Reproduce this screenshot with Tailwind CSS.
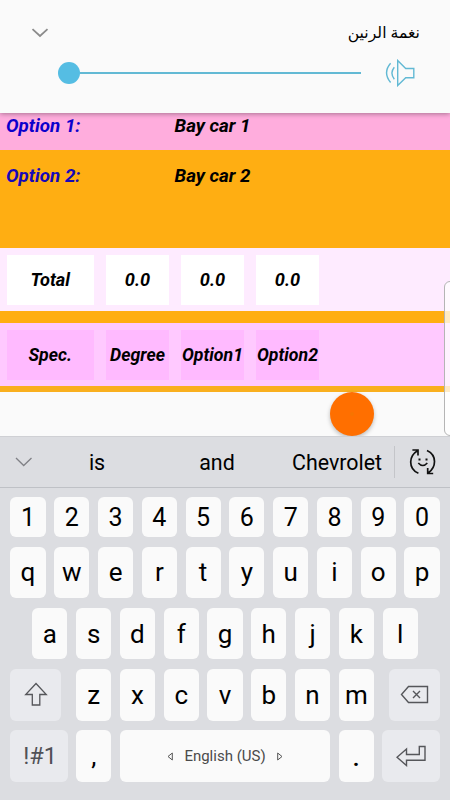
<!DOCTYPE html>
<html lang="en">
<head>
<meta charset="utf-8">
<title>Options</title>
<script src="https://cdn.jsdelivr.net/npm/@tailwindcss/browser@4"></script>
</head>
<body class="w-[450px] h-[800px] overflow-hidden bg-[#fafafa] font-[Roboto,sans-serif] text-black">
<div class="relative flex flex-col w-[450px] h-[800px]">
  <!-- Volume panel -->
  <header class="relative z-10 h-[113px] shrink-0 bg-[#fafafa] shadow-[0_1px_5px_rgba(0,0,0,0.35)] pt-[20px]">
    <div class="flex items-center justify-between h-6 pl-[31px] pr-[30px]">
      <svg class="w-[18px] h-[10px] mt-px" viewBox="0 0 18 10" fill="none" stroke="#8b8b8b" stroke-width="1.8"><path d="M1.5 1.2 9 8l7.500-6.800"/></svg>
      <span dir="rtl" lang="ar" class="text-[15.700px] leading-6 font-['Noto_Sans','DejaVu_Sans',sans-serif]">نغمة الرنين</span>
    </div>
    <div class="flex items-center h-[30px] mt-[14px] pl-[58px]">
      <div class="size-[21.500px] rounded-full bg-[#55bde3]"></div>
      <div class="h-[2.500px] w-[281.500px] bg-[#62b9d4]"></div>
      <svg class="w-[30px] h-[28px] ml-[23.500px]" viewBox="0 0 30 28" fill="none" stroke="#62b9d4" stroke-width="1.400"><path d="M12.700 1.500V26.500L20.700 18.700H28.800V9.500H20.700ZM9.300 8.200Q4.500 14 9.300 20.200M5.600 4.200Q-2.500 13.500 5.600 23.500"/></svg>
    </div>
  </header>

  <!-- Options table -->
  <main class="h-[323px] shrink-0 flex flex-col text-[18.200px] font-bold italic">
    <div class="h-[37px] bg-[#ffaddd] flex pl-[6px] leading-[26px] text-[18.800px]"><span class="w-[168.500px] text-[#0c00cc]">Option 1:</span><span>Bay car 1</span></div>
    <div class="h-[98px] bg-[#ffae12] flex pl-[6px] pt-[12px] leading-[28px] text-[18.800px]"><span class="w-[168.500px] text-[#1608b8]">Option 2:</span><span>Bay car 2</span></div>
    <div class="h-[63px] bg-[#feebff] flex gap-3 pl-[6.500px] pt-[6.500px]">
      <div class="w-[87.500px] h-[50px] bg-white flex items-center justify-center">Total</div>
      <div class="w-[63px] h-[50px] bg-white flex items-center justify-center">0.0</div>
      <div class="w-[63px] h-[50px] bg-white flex items-center justify-center">0.0</div>
      <div class="w-[63px] h-[50px] bg-white flex items-center justify-center">0.0</div>
    </div>
    <div class="h-[12px] bg-[#ffae12]"></div>
    <div class="h-[63px] bg-[#ffc9ff] flex gap-3 pl-[6.500px] pt-[6.500px] text-[17.700px]">
      <div class="w-[87.500px] h-[50px] pt-[2px] bg-[#ffbaff] flex items-center justify-center">Spec.</div>
      <div class="w-[63px] h-[50px] pt-[2px] bg-[#ffbaff] flex items-center justify-center">Degree</div>
      <div class="w-[63px] h-[50px] pt-[2px] bg-[#ffbaff] flex items-center justify-center">Option1</div>
      <div class="w-[63px] h-[50px] pt-[2px] bg-[#ffbaff] flex items-center justify-center">Option2</div>
    </div>
    <div class="h-[6px] bg-[#f9af1e]"></div>
  </main>

  <!-- Floating button and edge handle -->
  <div class="absolute left-[329.500px] top-[392px] size-[44px] rounded-full bg-[#ff6f00] shadow-[0_2px_4px_rgba(0,0,0,0.25)] flex items-center justify-center"><i class="size-1 rounded-full bg-[#f77400]"></i></div>
  <div class="absolute left-[444px] top-[281px] w-[12px] h-[155px] rounded-[6px] border border-[#b5b5b5] bg-white/75"></div>

  <!-- Keyboard -->
  <section class="relative h-[364px] bg-[#dcdde1]">
    <div class="h-[52px] border-t border-b border-t-[#cfd0d4] border-b-[#bfc1c6] flex items-center text-[21.400px]">
      <svg class="w-[18px] h-[10px] ml-[15px]" viewBox="0 0 18 10" fill="none" stroke="#808186" stroke-width="1.300"><path d="M1 1l7.700 7.500L16.500 1"/></svg>
      <span class="w-[120px] ml-[4px] text-center pt-[3px]">is</span>
      <span class="w-[120px] text-center pt-[3px]">and</span>
      <span class="w-[117px] text-center pl-[3px] pt-[3px]">Chevrolet</span>
      <i class="w-px h-8 bg-[#c4c5c9]"></i>
      <svg class="w-[28px] h-[28px] ml-[14px]" viewBox="0 0 28 28" fill="none" stroke="#111" stroke-width="1.700"><path d="M9.400 25.300Q1.700 22 1.700 14 1.700 7 8.400 2.700M3.400 2h5.600v5.500M18 2.500Q25.500 6 25.500 13.500 25.500 20.500 19.200 25M24.200 25.500h-5.500v-5.600"/><path d="M9.300 15q4.500 5 9 0"/><path d="M9.500 11.500h2M16.500 11.500h2" stroke-width="2"/></svg>
    </div>
    <div id="keys" class="flex flex-col items-center gap-[9.700px] pt-[9px] text-[26px] leading-none">
      <div class="flex gap-[8.700px] h-[40px] text-[25px]" data-row="1234567890"></div>
      <div class="flex gap-[8.700px] h-[51.500px]" data-row="qwertyuiop"></div>
      <div class="flex gap-[8.700px] h-[51.500px]" data-row="asdfghjkl"></div>
      <div class="flex h-[51.500px] w-[429.200px]">
        <div class="w-[50.700px] rounded-[6px] bg-[#e9eaee] flex items-center justify-center">
          <svg class="w-[24px] h-[25px]" viewBox="0 0 24 25" fill="none" stroke="#55565a" stroke-width="1.300"><path d="M12 1.500 22.300 12.500H15.800V23H8.300V12.500H1.700Z"/></svg>
        </div>
        <div class="flex gap-[8.700px] mx-[15px]" data-row="zxcvbnm"></div>
        <div class="w-[50.700px] rounded-[6px] bg-[#e9eaee] flex items-center justify-center">
          <svg class="w-[29px] h-[19px]" viewBox="0 0 29 19" fill="none" stroke="#55565a" stroke-width="1.400"><path d="M8.500 1.500H27.500V17.500H8.500L1.500 9.500ZM13 6l7 7M20 6l-7 7"/></svg>
        </div>
      </div>
      <div class="flex gap-[8.700px] h-[51.500px] w-[429.200px]">
        <div class="w-[57.200px] rounded-[6px] bg-[#e9eaee] flex items-center justify-center text-[23.500px] text-[#505156] pl-[2px] pt-px">!#1</div>
        <div class="w-[35.100px] rounded-[6px] bg-[#fafafa] flex items-center justify-center">,</div>
        <div class="flex-1 rounded-[6px] bg-[#fafafa] flex items-center justify-center gap-[11px] text-[15px] text-[#4a4a4a]">
          <svg class="w-[6px] h-[9px]" viewBox="0 0 6 9" fill="none" stroke="#555"><path d="M5.300 1v7L1 4.500Z"/></svg>
          <span>English (US)</span>
          <svg class="w-[6px] h-[9px]" viewBox="0 0 6 9" fill="none" stroke="#555"><path d="M.7 1v7L5 4.500Z"/></svg>
        </div>
        <div class="w-[35.100px] rounded-[6px] bg-[#fafafa] flex items-center justify-center font-medium pt-0.5">.</div>
        <div class="w-[57.200px] rounded-[6px] bg-[#e9eaee] flex items-center justify-center">
          <svg class="w-[30px] h-[22px]" viewBox="0 0 30 22" fill="none" stroke="#55565a" stroke-width="1.400"><path d="M23.300 1.500H29V15.200H10.500V20.500L1 12.300 10.500 4V9.500H23.300Z"/></svg>
        </div>
      </div>
    </div>
  </section>
</div>
<script>
document.querySelectorAll('[data-row]').forEach(function (row) {
  row.dataset.row.split('').forEach(function (ch) {
    var key = document.createElement('div');
    key.className = 'w-[35.100px] rounded-[6px] bg-[#fafafa] flex items-center justify-center';
    key.textContent = ch;
    row.appendChild(key);
  });
});
</script>
</body>
</html>
